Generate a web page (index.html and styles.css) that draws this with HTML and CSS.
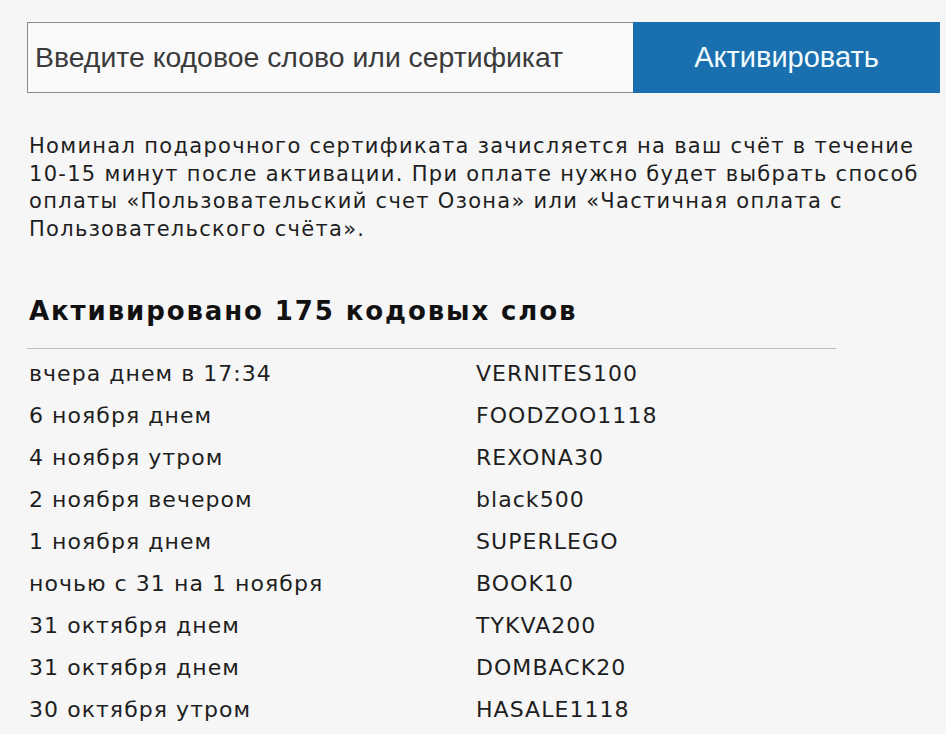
FILE: index.html
```html
<!DOCTYPE html>
<html lang="ru">
<head>
<meta charset="utf-8">
<link rel="stylesheet" href="styles.css">
</head>
<body>
<div class="page">
  <form class="activate">
    <input class="code-input" type="text" placeholder="Введите кодовое слово или сертификат">
    <button class="activate-btn" type="button">Активировать</button>
  </form>
  <p class="note">Номинал подарочного сертификата зачисляется на ваш счёт в течение 10-15 минут после активации. При оплате нужно будет выбрать способ оплаты «Пользовательский счет Озона» или «Частичная оплата с Пользовательского счёта».</p>
  <h2 class="count">Активировано 175 кодовых слов</h2>
  <div class="list">
    <div class="row"><span class="when">вчера днем в 17:34</span><span class="code">VERNITES100</span></div>
    <div class="row"><span class="when">6 ноября днем</span><span class="code">FOODZOO1118</span></div>
    <div class="row"><span class="when">4 ноября утром</span><span class="code">REXONA30</span></div>
    <div class="row"><span class="when">2 ноября вечером</span><span class="code">black500</span></div>
    <div class="row"><span class="when">1 ноября днем</span><span class="code">SUPERLEGO</span></div>
    <div class="row"><span class="when">ночью с 31 на 1 ноября</span><span class="code">BOOK10</span></div>
    <div class="row"><span class="when">31 октября днем</span><span class="code">TYKVA200</span></div>
    <div class="row"><span class="when">31 октября днем</span><span class="code">DOMBACK20</span></div>
    <div class="row"><span class="when">30 октября утром</span><span class="code">HASALE1118</span></div>
  </div>
</div>
</body>
</html>
```
FILE: styles.css
```css
html, body {
  margin: 0;
  padding: 0;
  background: #f6f6f6;
}
.page {
  padding: 22px 6px 0 27px;
  font-family: "DejaVu Sans", Verdana, sans-serif;
  color: #1e1e1e;
  overflow: hidden;
  height: 734px;
  box-sizing: border-box;
}
.activate {
  display: flex;
  height: 71px;
  margin: 0;
}
.code-input {
  flex: 0 0 606px;
  box-sizing: border-box;
  height: 71px;
  margin: 0;
  border: 1px solid #8a8a8a;
  border-right: none;
  background: #fafafa;
  padding: 0 0 0 7px;
  font-family: "Liberation Sans", Arial, sans-serif;
  font-size: 28.4px;
  color: #333;
  outline: none;
}
.code-input::placeholder {
  color: #3a3a3a;
  opacity: 1;
}
.activate-btn {
  flex: 0 0 307px;
  height: 71px;
  margin: 0;
  border: none;
  background: #1a6fae;
  color: #f2fbff;
  font-family: "Liberation Sans", Arial, sans-serif;
  font-size: 29px;
  padding: 0;
}
.note {
  margin: 40px 0 0 2px;
  font-size: 21px;
  letter-spacing: 1.3px;
  line-height: 27.5px;
  width: 905px;
}
.count {
  margin: 50px 0 0 2px;
  font-size: 26px;
  letter-spacing: 1.9px;
  line-height: 36px;
  font-weight: bold;
  color: #111;
}
.list {
  margin-top: 19px;
  width: 809px;
  border-top: 1px solid #bdbdbd;
  padding-top: 3px;
}
.row {
  display: grid;
  grid-template-columns: 447px 1fr;
  height: 42px;
  align-items: center;
  font-size: 22px;
  letter-spacing: 1.05px;
  padding-left: 2px;
}
```
